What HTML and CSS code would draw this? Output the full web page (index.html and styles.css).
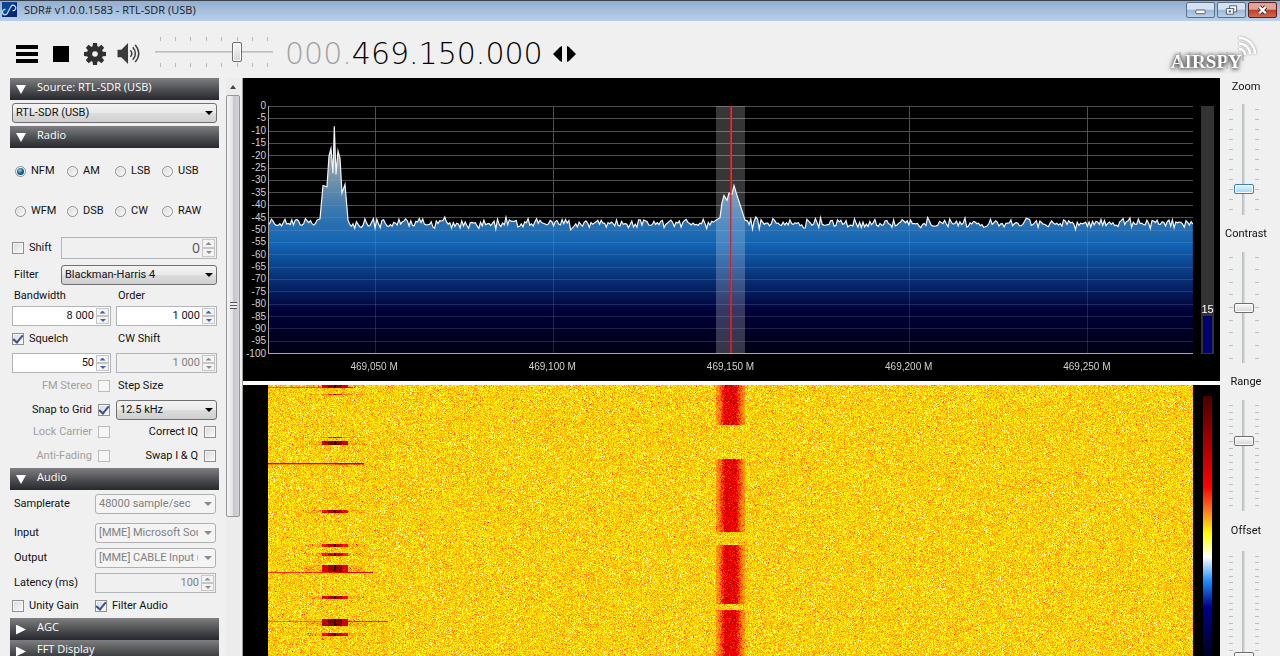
FILE: index.html
```html
<!DOCTYPE html>
<html lang="en">
<head>
<meta charset="utf-8">
<title>SDR# v1.0.0.1583 - RTL-SDR (USB)</title>
<link rel="stylesheet" href="styles.css">
</head>
<body>
<div class="window">
  <header class="titlebar">
    <svg class="app-icon" viewBox="0 0 15 15"><rect width="15" height="15" fill="#0d4596"/><path d="M0 15L15 0V15Z" fill="#082a6c"/><path d="M3.500 7.500a2.600 2.600 0 1 0 2 3.500L9 4.500a2.600 2.600 0 1 1 1.500 4" fill="none" stroke="#b9dcf8" stroke-width="1.300"/></svg>
    <h1 class="title">SDR# v1.0.0.1583 - RTL-SDR (USB)</h1>
    <div class="window-buttons">
      <button class="win-btn" aria-label="Minimize"><svg viewBox="0 0 28 15"><rect x="9" y="7.500" width="10" height="4" rx="1" fill="#fff" stroke="#4c5666"/></svg></button>
      <button class="win-btn" aria-label="Restore"><svg viewBox="0 0 28 15"><path d="M12 3h7.500v6.500h-7.500z" fill="#fff" stroke="#4c5666"/><path d="M15 5.500h2v1.500h-2z" fill="#4c5666"/><path d="M8.500 6h7.500v6h-7.500z" fill="#fff" stroke="#4c5666"/><path d="M11 8h2.500v2h-2.500z" fill="#4c5666"/></svg></button>
      <button class="win-btn close" aria-label="Close"><svg viewBox="0 0 28 15"><path d="M10.500 4L17.500 11M17.500 4L10.500 11" stroke="#48343a" stroke-width="4.600"/><path d="M10.500 4L17.500 11M17.500 4L10.500 11" stroke="#fff" stroke-width="2.600"/></svg></button>
    </div>
  </header>

  <div class="toolbar">
    <button class="tool menu" aria-label="Menu"><svg viewBox="0 0 22 20"><path d="M0 1h22v4H0zM0 8h22v4H0zM0 15h22v4H0z"/></svg></button>
    <button class="tool stop" aria-label="Stop"><svg viewBox="0 0 16 16"><path d="M0 0h16v16H0z"/></svg></button>
    <button class="tool gear" aria-label="Configure"><svg viewBox="0 0 22 22"><g fill="#303030"><circle cx="11" cy="11" r="8"/><path d="M9 0h4l.6 5h-5.200zM9 22h4l.6-5h-5.200zM0 9v4l5 .6v-5.200zM22 9v4l-5 .6v-5.200z"/><path transform="rotate(45 11 11)" d="M9 0h4l.6 5h-5.200zM9 22h4l.6-5h-5.200zM0 9v4l5 .6v-5.200zM22 9v4l-5 .6v-5.200z"/></g><circle cx="11" cy="11" r="2.800" fill="#f0f0f0"/></svg></button>
    <button class="tool speaker" aria-label="Mute"><svg viewBox="0 0 23 22"><path d="M0 7h4l7-7v22l-7-7H0z" fill="#3c3c3c"/><path d="M13.500 7.500q3 3.500 0 7M16 4.500q5.500 6.500 0 13M18.500 2q7.500 9 0 18" fill="none" stroke="#3c3c3c" stroke-width="1.500"/></svg></button>
    <div class="hslider" data-ticks="8"><input type="range" class="range-h" aria-label="Volume" min="0" max="100" value="71"></div>
    <output class="freq" aria-label="Frequency"><span class="freq-dim">000.</span><span>469.150.000</span></output>
    <button class="tool tune" aria-label="Center tuning"><svg viewBox="0 0 24 16"><path d="M9 0v16L7 15 0 8l7-7zM14 0v16l2-1 7-7-7-7z"/></svg></button>
    <svg class="logo" viewBox="0 0 100 42" role="img" aria-label="AIRSPY">
      <text x="7" y="36" class="logo-text">AIRSPY</text>
      <path d="M16 20v17M26 20v17M36 20v17M63 20v17M79 20v9" stroke="#a4a4a4" stroke-width="1"/>
      <g fill="none" stroke="#fff" stroke-width="2.500" class="logo-waves"><path d="M75 17a6 6 0 0 1 6 6"/><path d="M75 11.500a11 11 0 0 1 11 11"/><path d="M75 6a16 16 0 0 1 16 16"/></g>
    </svg>
  </div>

  <main class="main">
    <aside class="sidebar">
      <h2 class="section"><button><span class="tri down"></span>Source: RTL-SDR (USB)</button></h2>
      <div class="source"><span class="combo"><select aria-label="Source"><option>RTL-SDR (USB)</option></select></span></div>
      <h2 class="section"><button><span class="tri down"></span>Radio</button></h2>
      <div class="modes">
        <label><input type="radio" name="mode" checked>NFM</label>
        <label><input type="radio" name="mode">AM</label>
        <label><input type="radio" name="mode">LSB</label>
        <label><input type="radio" name="mode">USB</label>
        <label><input type="radio" name="mode">WFM</label>
        <label><input type="radio" name="mode">DSB</label>
        <label><input type="radio" name="mode">CW</label>
        <label><input type="radio" name="mode">RAW</label>
      </div>
      <div class="radio-form">
        <div class="row side-label shift">
          <label><input type="checkbox" id="shift">Shift</label>
          <span class="spin off big"><input type="text" aria-label="Shift amount" value="0" disabled><span class="steps"><button aria-label="Up" disabled></button><button aria-label="Down" disabled></button></span></span>
        </div>
        <div class="row side-label filter">
          <label class="inset" for="filter">Filter</label>
          <span class="combo"><select id="filter"><option>Blackman-Harris 4</option></select></span>
        </div>
        <div class="row halves caption"><label class="inset" for="bw">Bandwidth</label><label class="inset" for="order">Order</label></div>
        <div class="row halves">
          <span class="spin"><input type="text" id="bw" value="8 000"><span class="steps"><button aria-label="Up"></button><button aria-label="Down"></button></span></span>
          <span class="spin"><input type="text" id="order" value="1 000"><span class="steps"><button aria-label="Up"></button><button aria-label="Down"></button></span></span>
        </div>
        <div class="row halves tall"><label><input type="checkbox" checked>Squelch</label><label class="inset" for="cw">CW Shift</label></div>
        <div class="row halves">
          <span class="spin"><input type="text" aria-label="Squelch level" value="50"><span class="steps"><button aria-label="Up"></button><button aria-label="Down"></button></span></span>
          <span class="spin off"><input type="text" id="cw" value="1 000" disabled><span class="steps"><button aria-label="Up" disabled></button><button aria-label="Down" disabled></button></span></span>
        </div>
        <div class="row halves tall"><label class="trail off">FM Stereo<input type="checkbox" disabled></label><label class="inset" for="step">Step Size</label></div>
        <div class="row halves"><label class="trail">Snap to Grid<input type="checkbox" checked></label><span class="combo"><select id="step"><option>12.5 kHz</option></select></span></div>
        <div class="row halves check-row"><label class="trail off">Lock Carrier<input type="checkbox" disabled></label><label class="trail">Correct IQ<input type="checkbox"></label></div>
        <div class="row halves check-row"><label class="trail off">Anti-Fading<input type="checkbox" disabled></label><label class="trail">Swap I &amp; Q<input type="checkbox"></label></div>
      </div>
      <h2 class="section"><button><span class="tri down"></span>Audio</button></h2>
      <div class="audio-form">
        <label class="inset" for="rate">Samplerate</label>
        <span class="combo off"><select id="rate" disabled><option>48000 sample/sec</option></select></span>
        <label class="inset" for="in">Input</label>
        <span class="combo off"><select id="in" disabled><option>[MME] Microsoft Sound Mapper</option></select></span>
        <label class="inset" for="out">Output</label>
        <span class="combo off"><select id="out" disabled><option>[MME] CABLE Input (VB-Audio)</option></select></span>
        <label class="inset" for="lat">Latency (ms)</label>
        <span class="spin off"><input type="text" id="lat" value="100" disabled><span class="steps"><button aria-label="Up" disabled></button><button aria-label="Down" disabled></button></span></span>
        <label><input type="checkbox">Unity Gain</label>
        <label><input type="checkbox" checked>Filter Audio</label>
      </div>
      <h2 class="section"><button><span class="tri right"></span>AGC</button></h2>
      <h2 class="section"><button><span class="tri right"></span>FFT Display</button></h2>
    </aside>

    <div class="scrollbar"><span class="scroll-arrow"></span><div class="scroll-thumb"><span class="grip"></span></div></div>

    <section class="plots">
      <div class="spectrum">
        <div class="db-scale" id="db-scale"></div>
        <canvas class="trace" id="trace"></canvas>
        <div class="meter"><span class="meter-value">15</span><div class="meter-bar"></div></div>
        <div class="freq-scale"><span>469,050 M</span><span>469,100 M</span><span>469,150 M</span><span>469,200 M</span><span>469,250 M</span></div>
      </div>
      <div class="waterfall">
        <canvas class="fall" id="fall"></canvas>
        <div class="color-bar"></div>
      </div>
    </section>

    <aside class="sliders">
      <label for="zoom">Zoom</label>
      <div class="vslider" data-ticks="11"><input type="range" class="range-v hot" id="zoom" value="21"></div>
      <label for="contrast">Contrast</label>
      <div class="vslider" data-ticks="9"><input type="range" class="range-v" id="contrast" value="50"></div>
      <label for="range">Range</label>
      <div class="vslider" data-ticks="15"><input type="range" class="range-v" id="range" value="64"></div>
      <label for="offset">Offset</label>
      <div class="vslider" data-ticks="16"><input type="range" class="range-v" id="offset" value="0"></div>
    </aside>
  </main>
</div>
<script src="app.js"></script>
</body>
</html>
```
FILE: styles.css
```css
* { box-sizing: border-box; }
body { margin: 0; font: 11px/14px Roboto, "Liberation Sans", sans-serif; color: #111; background: #f0f0f0; }
button, input, select { font: inherit; color: inherit; margin: 0; }
button { padding: 0; border: 0; background: none; }
svg { display: block; }
.window { display: flex; flex-direction: column; height: 100vh; overflow: hidden; }

.titlebar { display: flex; align-items: flex-start; height: 21px; padding: 1px 3px 0 2px; border-top: 1px solid #39414c; background: linear-gradient(#93aecf, #b8d0ea); flex: none; }
.app-icon { width: 15px; height: 15px; }
.title { margin: 0 0 0 7px; font: 11px/16px "Open Sans", "Noto Sans", sans-serif; color: #14181f; flex: 1; }
.window-buttons { display: flex; gap: 2px; }
.win-btn { width: 29px; height: 16px; border: 1px solid #56708f; border-radius: 2px; background: linear-gradient(#d3e1f1 45%, #9db8d6 50%, #b9d0e8); }
.win-btn svg { width: 100%; height: 100%; }
.win-btn.close { border-color: #5b1d1f; background: linear-gradient(#e0a398 45%, #bd3f28 50%, #d0694c); }

.toolbar { display: flex; align-items: center; height: 57px; padding: 8px 16px 0; flex: none; }
.tool svg { width: 100%; height: 100%; }
.menu { width: 22px; height: 20px; }
.stop { width: 16px; height: 16px; margin-left: 15px; }
.gear { width: 22px; height: 22px; margin-left: 15px; }
.speaker { width: 23px; height: 21px; margin-left: 11px; }
.tune { width: 24px; height: 16px; margin-left: 10px; }
.freq { display: flex; margin-left: 12px; font: 200 30px/36px "DejaVu Sans Light", "DejaVu Sans", sans-serif; color: #000; }
.freq-dim { color: #a0a0a0; }
.logo { width: 100px; height: 42px; margin-left: auto; margin-top: -2px; }
.logo-text { font: bold 19px "Liberation Serif", serif; fill: #fff; filter: drop-shadow(0 0 2px #444) drop-shadow(0 1px 2px #777); }
.logo-waves { filter: drop-shadow(0 0 1px #888); }

.hslider, .vslider { display: grid; justify-items: center; align-items: center; }
.hslider { width: 118px; margin: -4px 0 0 15px; grid-template-rows: 4px 22px 4px; }
.vslider { grid-template-columns: 4px 20px 4px; gap: 1px; height: 111px; padding-right: 4px; justify-content: center; flex: none; }
.ticks { display: flex; justify-content: space-between; }
.hslider .ticks { width: 109px; height: 4px; }
.hslider .ticks i { width: 1px; background: #b9b9b9; }
.vslider .ticks { flex-direction: column; width: 4px; height: 102px; }
.vslider .ticks i { height: 1px; background: #bdbdbd; }
.range-h, .range-v { appearance: none; margin: 0; }
.range-h { width: 100%; height: 22px; background: linear-gradient(#b3b6b6, #d6dada) center / 100% 2px no-repeat; }
.range-v { width: 20px; height: 111px; writing-mode: vertical-lr; direction: rtl; background: linear-gradient(90deg, #b3b6b6, #dfe3e3) center / 3px 100% no-repeat; }
.range-h::-webkit-slider-thumb, .range-v::-webkit-slider-thumb { appearance: none; border: 1px solid #6d6d6d; border-radius: 2px; background: linear-gradient(#fafafa, #d4d4d4); box-shadow: inset 0 0 0 1px #fff; }
.range-h::-webkit-slider-thumb { width: 10px; height: 20px; }
.range-v::-webkit-slider-thumb { width: 20px; height: 10px; }
.range-v.hot::-webkit-slider-thumb { border-color: #3c7fb1; background: linear-gradient(#e4f4fd, #9bd7f8); }

.main { display: flex; flex: 1; min-height: 0; }
.sidebar { width: 209px; margin-left: 10px; overflow: hidden; flex: none; }
.section { margin: 0; }
.section button { display: flex; align-items: center; gap: 11px; width: 100%; height: 22px; padding: 0 0 4px 6px; font: 11px/16px "Open Sans", "Noto Sans", sans-serif; color: #fff; background: linear-gradient(#7f7f81, #4c4d50 55%, #25282d); }
.tri { width: 10px; height: 9px; margin-top: 5px; background: #fff; }
.tri.down { clip-path: polygon(0 0, 100% 0, 50% 100%); }
.tri.right { height: 10px; clip-path: polygon(0 0, 100% 50%, 0 100%); }
.source { padding: 3px 2px; }

.combo { display: grid; align-items: center; height: 20px; min-width: 0; }
.combo select { grid-area: 1 / 1; width: 100%; height: 100%; min-width: 0; appearance: none; padding: 0 17px 0 3px; border: 1px solid #707070; border-radius: 3px; background: linear-gradient(#f3f3f3, #e9e9e9 48%, #dcdcdc 52%, #cfcfcf); }
.combo::after { content: ""; grid-area: 1 / 1; justify-self: end; width: 8px; height: 4px; margin-right: 4px; background: #000; clip-path: polygon(0 0, 100% 0, 50% 100%); z-index: 1; pointer-events: none; }
.combo.off select { color: #808080; opacity: 1; border-color: #b0b0b0; background: #f4f4f4; }
.combo.off::after { background: #8a8a8a; }

.modes { display: grid; grid-template-columns: 52px 48px 47px 1fr; grid-auto-rows: 40px; padding: 3px 0 0 5px; align-items: center; }
label { display: flex; align-items: center; white-space: nowrap; }
input[type="radio"], input[type="checkbox"] { appearance: none; display: grid; place-items: center; flex: none; background: linear-gradient(135deg, #d6d8da, #fbfbfb); }
input[type="radio"] { width: 11px; height: 11px; margin-right: 5px; border: 1px solid #8e8f8f; border-radius: 50%; box-shadow: inset 0 0 0 1px #f6f6f6; }
input[type="radio"]:checked::before { content: ""; width: 7px; height: 7px; border-radius: 50%; background: radial-gradient(circle at 40% 35%, #8ad4f4, #14608c 50%, #0b2c45); }
input[type="checkbox"] { width: 12px; height: 12px; margin-right: 5px; border: 1px solid #8e8f8f; box-shadow: inset 0 0 0 1px #f6f6f6; }
input[type="checkbox"]:checked::before { content: ""; width: 4px; height: 8px; margin-top: -2px; border: solid #3b4f96; border-width: 0 2px 2px 0; transform: rotate(40deg); }
input[type="checkbox"]:disabled { border-color: #bcbcbc; background: #f6f6f6; }
.inset { padding-left: 2px; }

.radio-form { padding: 6px 2px 0; }
.row { display: grid; align-items: center; min-height: 20px; }
.side-label { grid-template-columns: 49px 1fr; }
.halves { grid-template-columns: 99px 1fr; column-gap: 5px; }
.shift { margin-bottom: 6px; }
.caption { min-height: 21px; }
.tall { min-height: 27px; padding-bottom: 2px; }
.check-row { min-height: 24px; }
.trail { justify-content: flex-end; }
.trail input[type="checkbox"] { margin: 0 1px 0 6px; }
.trail.off { color: #a0a0a0; }

.spin { display: flex; height: 20px; min-width: 0; padding: 1px; border: 1px solid #b1b5ba; background: #fff; }
.spin input { flex: 1; width: 20px; min-width: 0; padding: 0 2px 0 0; border: 0; background: none; text-align: right; }
.spin.off { background: #f0f0f0; }
.spin.off input { color: #808080; }
.spin.big { height: 22px; }
.spin.big input { font: 14px/18px "Open Sans", "Noto Sans", sans-serif; color: #555; }
.steps { display: grid; grid-template-rows: 1fr 1fr; width: 13px; }
.steps button { display: grid; place-items: center; border: 1px solid #c6c6c6; background: #f3f3f3; min-height: 0; }
.steps button::before { content: ""; width: 6px; height: 3px; background: #4460b0; clip-path: polygon(50% 0, 100% 100%, 0 100%); }
.steps button:last-child::before { transform: rotate(180deg); }
.spin.off .steps button::before { background: #8c8c8c; }

.audio-form { display: grid; grid-template-columns: 83px 1fr; grid-template-rows: 24px 20px 20px 20px 15px; row-gap: 5px; padding: 4px 3px 5px 2px; align-items: center; }
.audio-form > :nth-child(-n+2) { align-self: start; min-height: 20px; }

.scrollbar { display: flex; flex-direction: column; align-items: center; width: 14px; margin: 0 3px 0 7px; background: #ececec; flex: none; }
.scroll-arrow { width: 6px; height: 4px; margin: 7px 0 6px; background: #444; clip-path: polygon(50% 0, 100% 100%, 0 100%); }
.scroll-thumb { display: grid; place-items: center; width: 14px; height: 73%; border: 1px solid #969696; border-radius: 2px; background: linear-gradient(90deg, #f5f5f5, #e4e4e6 45%, #c6c6cb 55%, #d4d4d8); }
.grip { width: 7px; height: 7px; background: repeating-linear-gradient(#555 0 1px, #eee 1px 3px); }

.plots { display: grid; grid-template-rows: minmax(0, 303fr) minmax(0, 271fr); gap: 4px; flex: 1; min-width: 0; background: #fafafa; box-shadow: -1px 0 #a0a0a0; }
.spectrum { display: grid; grid-template-columns: 25px 1fr 27px; grid-template-rows: minmax(0, 1fr) 27px; padding-top: 28px; background: #000; color: #d0d0d0; font: 10px/12px "Liberation Sans", Arial, sans-serif; }
.db-scale { display: flex; flex-direction: column; justify-content: space-between; align-items: flex-end; margin: -6px 0; padding-right: 2px; }
.trace { width: 100%; height: 100%; min-width: 0; min-height: 0; }
.meter { display: flex; flex-direction: column; justify-content: flex-end; align-items: center; width: 13px; margin-left: 8px; background: #333; color: #fff; }
.meter-value { font-size: 11px; }
.meter-bar { width: 9px; height: 15%; margin: 1px 0; background: #00006e; }
.freq-scale { grid-column: 2; display: grid; grid-template-columns: repeat(5, 1fr); padding: 7px 17px 0; text-align: center; }
.waterfall { display: grid; grid-template-columns: 1fr 27px; grid-template-rows: minmax(0, 1fr); padding-left: 25px; background: #000; }
.fall { width: 100%; height: 100%; min-width: 0; min-height: 0; }
.color-bar { width: 9px; margin: 11px 0 0 10px; background: linear-gradient(#480000, #f00 35%, #ff6a1e 43%, #ff0 53%, #fff 62%, #1e90ff 71%, #00008b 81%, #000024); }

.sliders { display: flex; flex-direction: column; width: 60px; padding-right: 9px; flex: none; }
.sliders label { justify-content: center; height: 37px; margin-right: -1px; flex: none; }
.sliders label:first-child { height: 26px; padding-bottom: 9px; }
.sliders label:last-of-type { height: 40px; }
```
FILE: app.js
```js
// Seeded generator keeps the noise stable between repaints.
let seed = 20240;
function rnd() {
  seed = (seed * 1664525 + 1013904223) >>> 0;
  return seed / 4294967296;
}
function gauss() {
  return (rnd() + rnd() + rnd() + rnd() - 2) * 1.7;
}

document.querySelectorAll('[data-ticks]').forEach(function (box) {
  const make = function () {
    const t = document.createElement('div');
    t.className = 'ticks';
    for (let i = 0; i < Number(box.dataset.ticks); i++) t.appendChild(document.createElement('i'));
    return t;
  };
  box.prepend(make());
  box.append(make());
});

const scale = document.getElementById('db-scale');
for (let db = 0; db >= -100; db -= 5) {
  const s = document.createElement('span');
  s.textContent = db;
  scale.appendChild(s);
}

const SPAN = 925;
// Signal peaks: [position, level in dB]
const peaks = [
  [[49, -46], [52, -45.500], [55, -32], [59, -32.500], [61, -20], [63, -17], [65, -27], [66.300, -8], [68, -27.500], [70, -18], [72, -21], [74, -35], [77, -31.500], [80, -46]],
  [[448, -46], [452, -45], [454, -39], [456, -36], [459, -38], [461, -35], [464, -35.500], [466, -32], [469, -36], [473, -41], [477, -46]]
];

function drawTrace() {
  const c = document.getElementById('trace');
  const w = c.width = c.clientWidth, h = c.height = c.clientHeight;
  const g = c.getContext('2d');
  const k = w / SPAN, H = h - 1;
  const y = function (db) { return -db / 100 * H + 0.5; };
  function grid(color) {
    g.fillStyle = color;
    for (let i = 0; i <= 20; i++) g.fillRect(0, Math.round(i * H / 20), w, 1);
    for (let i = 0; i < 5; i++) g.fillRect(Math.round((107 + i * 178) * k), 0, 1, h);
  }
  grid('#4e4e4e');

  seed = 771;
  const pts = [];
  for (let x = 0; x <= SPAN; x += 1.7) {
    if (peaks.some(function (p) { return x >= p[0][0] - 1 && x <= p[p.length - 1][0] + 1; })) continue;
    pts.push([x, -47.300 + gauss() * 1.050]);
  }
  peaks.forEach(function (p) { pts.push.apply(pts, p); });
  pts.sort(function (a, b) { return a[0] - b[0]; });

  const grad = g.createLinearGradient(0, 0, 0, H);
  grad.addColorStop(0, '#e6ddd0');
  grad.addColorStop(0.250, '#8a9ea6');
  grad.addColorStop(0.420, '#3a78ae');
  grad.addColorStop(0.560, '#1064b4');
  grad.addColorStop(0.830, '#000038');
  grad.addColorStop(1, '#000016');
  g.save();
  g.beginPath();
  g.moveTo(0, H);
  pts.forEach(function (p) { g.lineTo(p[0] * k, y(p[1])); });
  g.lineTo(w, H);
  g.fillStyle = grad;
  g.fill();
  g.clip();
  grid('rgba(150,170,215,0.2)');
  g.restore();
  g.beginPath();
  pts.forEach(function (p) { g.lineTo(p[0] * k, y(p[1])); });
  g.strokeStyle = '#f2f6fa';
  g.lineWidth = 1.200;
  g.stroke();

  g.fillStyle = 'rgba(255,255,255,0.21)';
  g.fillRect(448 * k, 0, 29 * k, H);
  g.fillStyle = 'rgba(215,30,35,0.9)';
  g.fillRect(Math.round(462 * k), 0, 1.500, H);
  g.fillStyle = '#a8a8a8';
  g.fillRect(0, 0, 1, H + 1);
  g.fillRect(0, Math.round(H), w, 1);
}

const stops = [
  [0, 255, 255, 255], [0.220, 255, 255, 90], [0.340, 255, 238, 0], [0.550, 255, 190, 0],
  [0.800, 255, 120, 10], [1, 255, 0, 0], [1.300, 130, 0, 0], [1.600, 40, 0, 0]
];
function heat(v) {
  if (v <= 0) return stops[0].slice(1);
  for (let i = 1; i < stops.length; i++) {
    if (v <= stops[i][0]) {
      const a = stops[i - 1], b = stops[i], t = (v - a[0]) / (b[0] - a[0]);
      return [1, 2, 3].map(function (n) { return a[n] + (b[n] - a[n]) * t; });
    }
  }
  return stops[stops.length - 1].slice(1);
}

// Bursts: [first row, last row, strength]; lines: [row, end, strength]
const bursts = [[0, 2, 1.250], [9, 9, 0.950], [52, 52, 0.950], [56, 59, 1.300], [125, 127, 1.200], [159, 161, 1.150], [168, 170, 1.150], [180, 186, 1.250], [211, 213, 1.200], [234, 240, 1.300], [248, 250, 1.200]];
const lines = [[78, 96, 1.080], [79, 96, 0.750], [187, 105, 0.950], [236, 120, 0.820], [2, 85, 0.850]];
const talk = [[0, 39], [74, 146], [160, 218], [225, 1000]];

function drawFall() {
  const c = document.getElementById('fall');
  const w = c.width = c.clientWidth, h = c.height = c.clientHeight;
  const g = c.getContext('2d');
  const img = g.createImageData(w, h);
  const k = SPAN / w;
  seed = 4242;
  for (let yy = 0; yy < h; yy++) {
    const b = bursts.find(function (r) { return yy >= r[0] && yy <= r[1]; });
    const l = lines.find(function (r) { return yy === r[0]; });
    const on = talk.some(function (r) { return yy >= r[0] && yy <= r[1]; });
    for (let xx = 0; xx < w; xx++) {
      const x = xx * k;
      let v = 0.465 + gauss() * 0.155;
      const d = Math.abs(x - 66.500);
      if (b && d < 13.500) v = b[2] - (d > 7 ? 0.170 : 0) + (d < 1 ? 0.300 : 0) + gauss() * 0.060;
      else if (b && d < 30) v += 0.120;
      if (l && x < l[1]) v = Math.max(v, l[2] + (x > 66 ? 0.120 : 0) + gauss() * 0.050);
      const e = Math.abs(x - 462);
      if (on && e < 15) v = Math.max(v + 0.100, 1.060 - Math.max(0, e - 5) * 0.046 + gauss() * 0.080);
      const rgb = heat(v), i = (yy * w + xx) * 4;
      img.data[i] = rgb[0];
      img.data[i + 1] = rgb[1];
      img.data[i + 2] = rgb[2];
      img.data[i + 3] = 255;
    }
  }
  g.putImageData(img, 0, 0);
}

function draw() {
  drawTrace();
  drawFall();
}
draw();
window.addEventListener('resize', draw);
```
